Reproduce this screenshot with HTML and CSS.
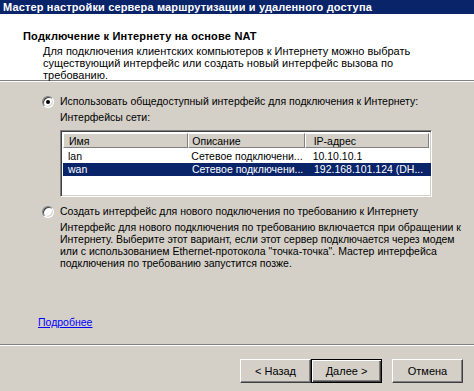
FILE: index.html
```html
<!DOCTYPE html>
<html lang="ru">
<head>
    <meta charset="UTF-8">
    <title>Мастер настройки сервера маршрутизации и удаленного доступа</title>
    <link rel="stylesheet" href="styles.css">
</head>
<body>
    <div class="wizard">
        <div class="titlebar">Мастер настройки сервера маршрутизации и удаленного доступа</div>

        <div class="header">
            <h1>Подключение к Интернету на основе NAT</h1>
            <p>Для подключения клиентских компьютеров к Интернету можно выбрать<br>
            существующий интерфейс или создать новый интерфейс вызова по<br>
            требованию.</p>
        </div>

        <div class="content">
            <label class="option">
                <span class="radio checked"></span>
                Использовать общедоступный интерфейс для подключения к Интернету:
            </label>
            <div class="sub-label">Интерфейсы сети:</div>

            <div class="listview">
                <div class="list-row list-head">
                    <div class="cell c1">Имя</div>
                    <div class="cell c2">Описание</div>
                    <div class="cell c3">IP-адрес</div>
                </div>
                <div class="list-row">
                    <div class="cell c1">lan</div>
                    <div class="cell c2">Сетевое подключени...</div>
                    <div class="cell c3">10.10.10.1</div>
                </div>
                <div class="list-row selected">
                    <div class="cell c1">wan</div>
                    <div class="cell c2">Сетевое подключени...</div>
                    <div class="cell c3">192.168.101.124 (DH...</div>
                </div>
            </div>

            <label class="option second">
                <span class="radio"></span>
                Создать интерфейс для нового подключения по требованию к Интернету
            </label>
            <p class="option-desc">Интерфейс для нового подключения по требованию включается при обращении к<br>
            Интернету. Выберите этот вариант, если этот сервер подключается через модем<br>
            или с использованием Ethernet-протокола "точка-точка". Мастер интерфейса<br>
            подключения по требованию запустится позже.</p>

            <a href="#" class="more">Подробнее</a>
        </div>

        <div class="buttons">
            <button class="btn">&lt; Назад</button>
            <button class="btn default">Далее &gt;</button>
            <button class="btn cancel">Отмена</button>
        </div>
    </div>
</body>
</html>
```

FILE: styles.css
```css
body {
    margin: 0;
    background-color: #d4d0c8;
    font-family: 'Liberation Sans', Arial, sans-serif;
    font-size: 11px;
    color: #000;
}

.wizard {
    width: 474px;
    height: 391px;
    display: flex;
    flex-direction: column;
    background-color: #d4d0c8;
    overflow: hidden;
}

.titlebar {
    height: 14px;
    line-height: 14px;
    padding-left: 3px;
    background-color: #0a246a;
    color: #fff;
    font-weight: bold;
    letter-spacing: 0.15px;
    white-space: nowrap;
}

.header {
    height: 67px;
    background-color: #fff;
    border-bottom: 1px solid #808080;
    box-shadow: 0 1px 0 #fff;
    box-sizing: border-box;
    padding-top: 16px;
}

.header h1 {
    margin: 0 0 0 23px;
    font-size: 11px;
    line-height: 13px;
    font-weight: bold;
    letter-spacing: 0.2px;
}

.header p {
    margin: 2px 0 0 43px;
    line-height: 12px;
    white-space: nowrap;
}

.content {
    flex: 1;
    padding-top: 14px;
    padding-left: 42px;
    font-size: 10.5px;
}

.option {
    display: flex;
    align-items: center;
    gap: 6px;
    height: 13px;
    line-height: 13px;
    white-space: nowrap;
}

.option.second {
    margin-top: 8px;
}

.radio {
    position: relative;
    width: 12px;
    height: 12px;
    box-sizing: border-box;
    border-radius: 50%;
    background-color: #fff;
    border: 1px solid;
    border-color: #808080 #fff #fff #808080;
    box-shadow: inset 1px 1px 0 #404040, inset -1px -1px 0 #d4d0c8;
    flex-shrink: 0;
}

.radio.checked::after {
    content: "";
    position: absolute;
    left: 3px;
    top: 3px;
    width: 4px;
    height: 4px;
    border-radius: 50%;
    background-color: #000;
}

.sub-label {
    margin: 3px 0 0 18px;
    line-height: 13px;
}

.listview {
    width: 372px;
    height: 67px;
    margin: 6px 0 0 18px;
    box-sizing: border-box;
    background-color: #fff;
    border: 1px solid;
    border-color: #808080 #fff #fff #808080;
    box-shadow: inset 1px 1px 0 #404040, inset -1px -1px 0 #d4d0c8;
    padding: 2px;
}

.list-row {
    display: flex;
    height: 13px;
    line-height: 13px;
    white-space: nowrap;
}

.list-head {
    height: 15px;
    line-height: 14px;
    margin-bottom: 2px;
}

.list-head .cell {
    background-color: #d4d0c8;
    border-top: 1px solid #fff;
    border-left: 1px solid #fff;
    border-right: 1px solid #808080;
    border-bottom: 1px solid #808080;
}

.cell {
    box-sizing: border-box;
    overflow: hidden;
}

.c1 {
    width: 126px;
    padding-left: 5px;
}

.c2 {
    width: 117px;
    padding-left: 3px;
}

.c3 {
    width: 125px;
    padding-left: 8px;
}

.selected {
    background-color: #0a246a;
    color: #fff;
    width: 368px;
}

.option-desc {
    margin: 3px 0 0 18px;
    line-height: 12px;
    white-space: nowrap;
}

.more {
    display: inline-block;
    margin: 47px 0 0 -4px;
    color: #0000ff;
    line-height: 13px;
}

.buttons {
    display: flex;
    justify-content: flex-end;
    height: 47px;
    box-sizing: border-box;
    border-top: 1px solid #808080;
    box-shadow: inset 0 1px 0 #fff;
    padding: 14px 11px 0 0;
}

.btn {
    width: 71px;
    height: 24px;
    padding: 0;
    font-family: 'Liberation Sans', Arial, sans-serif;
    font-size: 11px;
    color: #000;
    background-color: #d4d0c8;
    border: 1px solid;
    border-color: #fff #404040 #404040 #fff;
    box-shadow: inset -1px -1px 0 #808080;
}

.btn.default {
    border: 1px solid #000;
    box-shadow: inset 1px 1px 0 #fff, inset -1px -1px 0 #404040, inset -2px -2px 0 #808080;
}

.btn.cancel {
    margin-left: 10px;
}
```
